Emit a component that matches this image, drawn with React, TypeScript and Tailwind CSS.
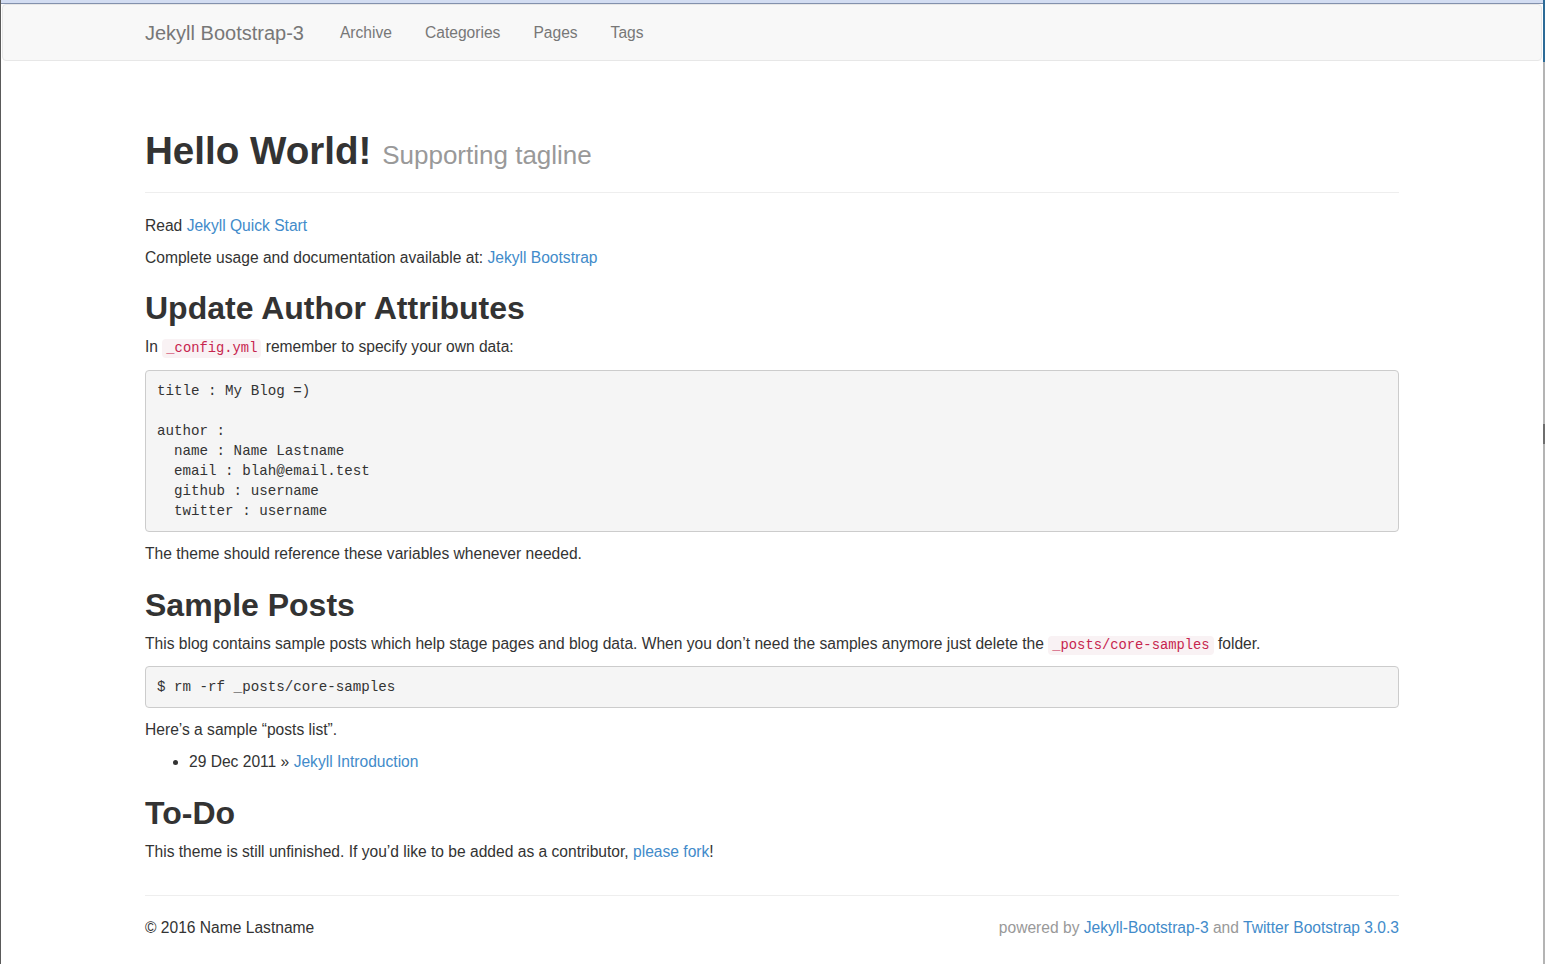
import React from "react";

const link = "text-[#428bca]";
const code = "rounded-[4px] bg-[#f9f2f4] px-[4px] py-[2px] font-['Liberation_Mono',monospace] text-[13.8px] leading-none text-[#c7254e]";
const pre = "rounded-[4px] border border-[#cccccc] bg-[#f5f5f5] px-[11px] py-[10px] font-['Liberation_Mono',monospace] text-[14.2px] leading-[20px] text-[#333333] whitespace-pre";

const config = `title : My Blog =)

author :
  name : Name Lastname
  email : blah@email.test
  github : username
  twitter : username`;

const App = () => {
  return (
    <div className="flex h-[964px] w-[1545px] overflow-hidden bg-white font-['Liberation_Sans',Arial,sans-serif] text-[15.6px] leading-[22px] text-[#333333]">
      <div className="w-px flex-none bg-[#5a5a5a]" />
      <div className="flex min-w-0 flex-1 flex-col">
        {/* window chrome strip */}
        <div className="h-[3px] flex-none bg-[#d3ddf2]" />
        <div className="h-px flex-none bg-[#8391ad]" />

        {/* navbar */}
        <nav className="mx-px flex h-[57px] flex-none items-center rounded-[4px] border border-[#e7e7e7] bg-[#f8f8f8]">
          <div className="mx-auto flex w-[1254px] items-center gap-[32px] text-[#777777]">
            <span className="text-[20px] leading-[22px]">Jekyll Bootstrap-3</span>
            <div className="ml-[4px] flex items-center gap-[33px] text-[15.6px]">
              <span>Archive</span>
              <span>Categories</span>
              <span>Pages</span>
              <span>Tags</span>
            </div>
          </div>
        </nav>

        <main className="mx-auto flex w-[1254px] flex-col">
          <div className="mt-[69px] border-b border-[#eeeeee] pb-[16px]">
            <h1 className="text-[38.6px] font-bold leading-[42px] text-[#333333]">
              Hello World! <span className="text-[26px] font-normal text-[#999999]">Supporting tagline</span>
            </h1>
          </div>

          <p className="mt-[22px]">
            Read <a className={link}>Jekyll Quick Start</a>
          </p>
          <p className="mt-[10px]">
            Complete usage and documentation available at: <a className={link}>Jekyll Bootstrap</a>
          </p>

          <h2 className="mt-[22px] text-[32px] font-bold leading-[35px]">Update Author Attributes</h2>
          <p className="mt-[10px]">
            In <code className={code}>_config.yml</code> remember to specify your own data:
          </p>
          <pre className={`${pre} mt-[12px]`}>{config}</pre>
          <p className="mt-[11px]">The theme should reference these variables whenever needed.</p>

          <h2 className="mt-[23px] text-[32px] font-bold leading-[35px]">Sample Posts</h2>
          <p className="mt-[10px]">
            This blog contains sample posts which help stage pages and blog data. When you don’t need the samples anymore just delete the{" "}
            <code className={code}>_posts/core-samples</code> folder.
          </p>
          <pre className={`${pre} mt-[11px]`}>$ rm -rf _posts/core-samples</pre>
          <p className="mt-[11px]">Here’s a sample “posts list”.</p>
          <ul className="mt-[10px] list-disc pl-[44px]">
            <li>
              <span>29 Dec 2011</span> » <a className={link}>Jekyll Introduction</a>
            </li>
          </ul>

          <h2 className="mt-[23px] text-[32px] font-bold leading-[35px]">To-Do</h2>
          <p className="mt-[10px]">
            This theme is still unfinished. If you’d like to be added as a contributor, <a className={link}>please fork</a>!
          </p>

          <footer className="mt-[32px] border-t border-[#eeeeee] pt-[21px]">
            <div className="flex items-center justify-between">
              <p>© 2016 Name Lastname</p>
              <p className="text-[#999999]">
                powered by <a className={link}>Jekyll-Bootstrap-3</a> and <a className={link}>Twitter Bootstrap 3.0.3</a>
              </p>
            </div>
          </footer>
        </main>
      </div>
      <div className="flex w-[2px] flex-none flex-col bg-[#b4b4b4]">
        <div className="h-[62px] bg-[#2d6b97]" />
        <div className="mt-[362px] h-[20px] bg-[#6e6e6e]" />
      </div>
    </div>
  );
};

export default App;
